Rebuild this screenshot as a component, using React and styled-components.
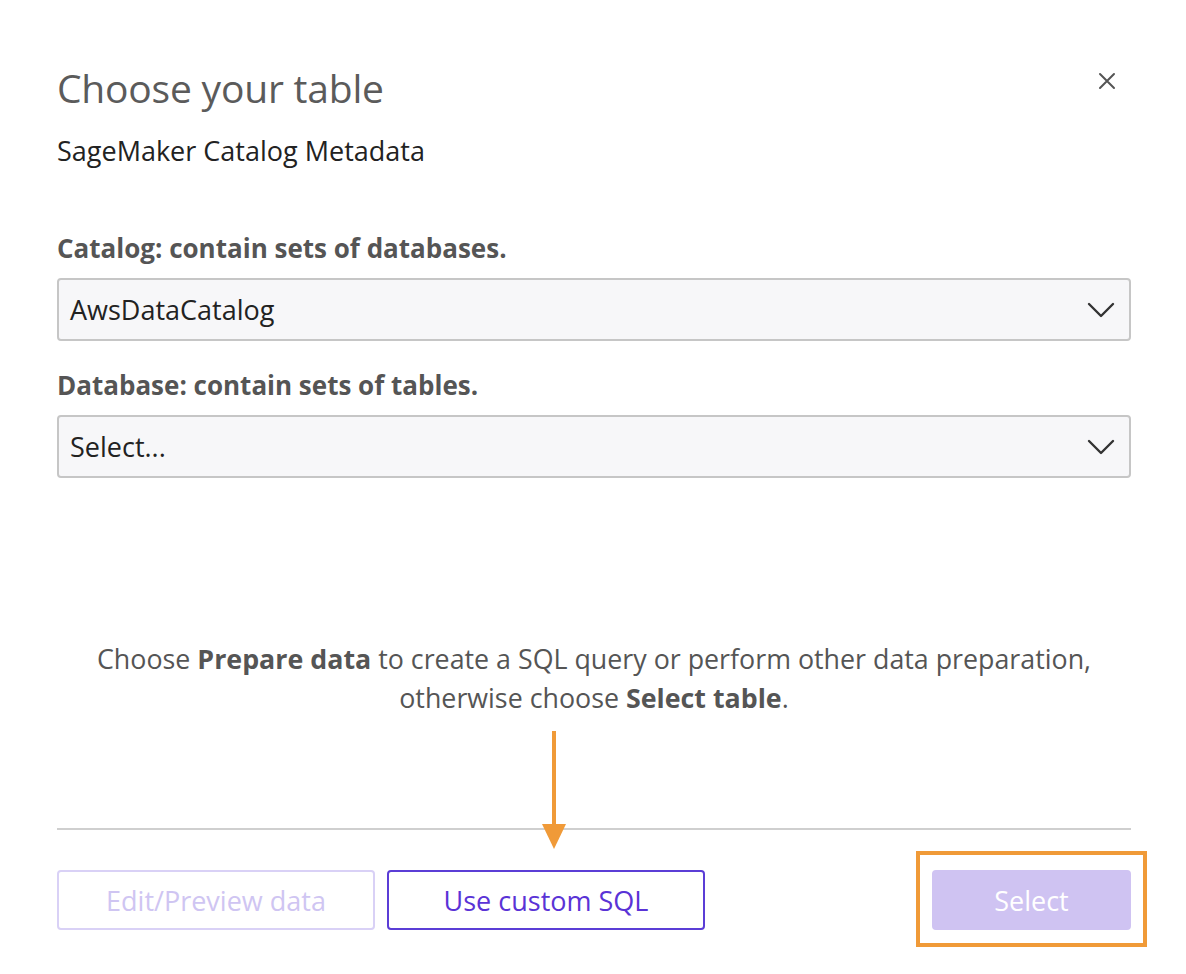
import React from "react";
import styled, { createGlobalStyle } from "styled-components";

const Global = createGlobalStyle`
  body {
    margin: 0;
    background: #fff;
    font-family: "Open Sans", "Noto Sans", sans-serif;
  }
`;

function Chevron() {
  return (
    <svg width="28" height="16" viewBox="0 0 28 16" fill="none">
      <path d="M2 2l12 12L26 2" stroke="#333" strokeWidth="2.4" strokeLinecap="round" strokeLinejoin="round" />
    </svg>
  );
}

function CloseIcon() {
  return (
    <svg width="18" height="18" viewBox="0 0 18 18" fill="none">
      <path d="M2 2l14 14M16 2L2 16" stroke="#555" strokeWidth="2" strokeLinecap="round" />
    </svg>
  );
}

function App() {
  return (
    <Wrap>
      <Global />
      <Header>
        <Title>Choose your table</Title>
        <Close aria-label="close">
          <CloseIcon />
        </Close>
      </Header>
      <Subtitle>SageMaker Catalog Metadata</Subtitle>

      <Field>
        <Label>Catalog: contain sets of databases.</Label>
        <SelectBox>
          <span>AwsDataCatalog</span>
          <Chevron />
        </SelectBox>
      </Field>
      <Field>
        <Label>Database: contain sets of tables.</Label>
        <SelectBox>
          <span>Select...</span>
          <Chevron />
        </SelectBox>
      </Field>

      <Hint>
        Choose <b>Prepare data</b> to create a SQL query or perform other data preparation,
        <br />
        otherwise choose <b>Select table</b>.
      </Hint>

      <Footer>
        <Arrow>
          <svg width="26" height="120" viewBox="0 0 26 120">
            <rect x="11" y="0" width="4" height="100" fill="#f09a38" />
            <polygon points="1,93 25,93 13,118" fill="#f09a38" />
          </svg>
        </Arrow>
        <Buttons>
          <Button $variant="disabled">Edit/Preview data</Button>
          <Button $variant="outline">Use custom SQL</Button>
        </Buttons>
        <Highlight>
          <Button $variant="primary" $width="199px">Select</Button>
        </Highlight>
      </Footer>
    </Wrap>
  );
}

export default App;

const Wrap = styled.div`
  width: 1186px;
  height: 974px;
  box-sizing: border-box;
  padding: 62px 55px 0 57px;
  position: relative;
`;

const Header = styled.div`
  display: flex;
  justify-content: space-between;
  align-items: flex-start;
`;

const Title = styled.h1`
  margin: 0;
  font-size: 39px;
  font-weight: 400;
  line-height: 52px;
  color: #5b5b5b;
  letter-spacing: -0.2px;
`;

const Close = styled.button`
  border: none;
  background: none;
  padding: 0;
  margin: 10px 15px 0 0;
  cursor: pointer;
  display: flex;
`;

const Subtitle = styled.p`
  margin: 20px 0 64px;
  font-size: 27px;
  line-height: 34px;
  color: #222;
`;

const Field = styled.div`
  display: flex;
  flex-direction: column;
  gap: 14px;
  margin-bottom: 28px;
`;

const Label = styled.label`
  font-size: 26px;
  font-weight: 700;
  line-height: 32px;
  color: #555;
`;

const SelectBox = styled.div`
  height: 63px;
  box-sizing: border-box;
  border: 2px solid #c6c6c6;
  border-radius: 4px;
  background: #f7f7f9;
  display: flex;
  align-items: center;
  justify-content: space-between;
  padding: 0 14px 0 11px;
  font-size: 27px;
  color: #222;
`;

const Hint = styled.p`
  margin: 161px 0 0;
  text-align: center;
  font-size: 26.8px;
  line-height: 39px;
  color: #555;
  b {
    font-weight: 700;
  }
`;

const Footer = styled.div`
  position: relative;
  margin-top: 111px;
  border-top: 2px solid #cfcfcf;
  padding-top: 40px;
  display: flex;
  justify-content: space-between;
  align-items: flex-start;
`;

const Buttons = styled.div`
  display: flex;
  gap: 12px;
`;

const Arrow = styled.div`
  position: absolute;
  left: 484px;
  top: -99px;
  display: flex;
`;

const Highlight = styled.div`
  position: relative;
  &::before {
    content: "";
    position: absolute;
    left: -16px;
    right: -16px;
    top: -19px;
    bottom: -17px;
    border: 4px solid #f09a38;
  }
`;

const Button = styled.button`
  width: ${(p) => p.$width || "318px"};
  height: 60px;
  box-sizing: border-box;
  border-radius: 4px;
  font-family: "Open Sans", sans-serif;
  font-size: 27px;
  font-weight: 500;
  cursor: pointer;
  background: ${(p) => (p.$variant === "primary" ? "#cfc3f2" : "#fff")};
  border: 2px solid
    ${(p) =>
      p.$variant === "outline"
        ? "#5b3dd6"
        : p.$variant === "primary"
        ? "#cfc3f2"
        : "#d9d1f6"};
  color: ${(p) =>
    p.$variant === "outline" ? "#5a33d6" : p.$variant === "primary" ? "#fff" : "#cfc5f2"};
`;
